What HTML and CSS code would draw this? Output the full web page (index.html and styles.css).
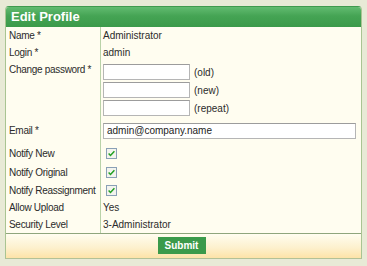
FILE: index.html
```html
<!DOCTYPE html>
<html lang="en">
<head>
    <meta charset="UTF-8">
    <title>Edit Profile</title>
    <link rel="stylesheet" href="styles.css">
</head>
<body>
    <div class="panel">
        <div class="panel-head">Edit Profile</div>
        <form class="profile">
            <div class="grid">
                <div class="label">Name *</div>
                <div class="value">Administrator</div>

                <div class="label">Login *</div>
                <div class="value">admin</div>

                <div class="label top">Change password *</div>
                <div class="value pw">
                    <div class="pw-line"><input type="password" class="short"><span>(old)</span></div>
                    <div class="pw-line"><input type="password" class="short"><span>(new)</span></div>
                    <div class="pw-line"><input type="password" class="short"><span>(repeat)</span></div>
                </div>

                <div class="label">Email *</div>
                <div class="value"><input type="text" class="wide" value="admin@company.name"></div>

                <div class="label">Notify New</div>
                <div class="value"><span class="check"><svg width="11" height="11" viewBox="0 0 11 11"><rect x="0.5" y="0.5" width="10" height="10" fill="#f3f4ee" stroke="#8aa0b6"/><path d="M2.6 5.4 L4.5 7.4 L8.4 3.2" fill="none" stroke="#22a022" stroke-width="1.5"/></svg></span></div>

                <div class="label">Notify Original</div>
                <div class="value"><span class="check"><svg width="11" height="11" viewBox="0 0 11 11"><rect x="0.5" y="0.5" width="10" height="10" fill="#f3f4ee" stroke="#8aa0b6"/><path d="M2.6 5.4 L4.5 7.4 L8.4 3.2" fill="none" stroke="#22a022" stroke-width="1.5"/></svg></span></div>

                <div class="label">Notify Reassignment</div>
                <div class="value"><span class="check"><svg width="11" height="11" viewBox="0 0 11 11"><rect x="0.5" y="0.5" width="10" height="10" fill="#f3f4ee" stroke="#8aa0b6"/><path d="M2.6 5.4 L4.5 7.4 L8.4 3.2" fill="none" stroke="#22a022" stroke-width="1.5"/></svg></span></div>

                <div class="label">Allow Upload</div>
                <div class="value">Yes</div>

                <div class="label">Security Level</div>
                <div class="value">3-Administrator</div>
            </div>
            <div class="panel-foot">
                <button type="button">Submit</button>
            </div>
        </form>
    </div>
</body>
</html>
```

FILE: styles.css
```css
body {
    margin: 0;
    padding: 6px 0 0 5px;
    background-color: #e8ead6;
    font-family: 'Liberation Sans', Arial, sans-serif;
    font-size: 10px;
    color: #2b2b2b;
}
.panel {
    width: 357px;
    box-sizing: border-box;
    border: 1px solid #a9c492;
    border-top-color: #3f9a4e;
    border-bottom-color: #b3c197;
    border-radius: 4px 4px 0 0;
    background-color: #fffdf0;
    overflow: hidden;
}
.panel-head {
    height: 20px;
    line-height: 20px;
    padding-left: 5px;
    background: linear-gradient(#62bb70, #45a454 45%, #3b9a4a);
    color: #ffffff;
    font-size: 13px;
    font-weight: bold;
}
.grid {
    display: grid;
    grid-template-columns: 95px 1fr;
    grid-template-rows: 17px 17px 58px 23px 22px 17px 18px 17px 17px;
}
.label {
    display: flex;
    align-items: center;
    padding-left: 3px;
    border-right: 1px solid #b9d2a8;
    white-space: nowrap;
    letter-spacing: -0.3px;
}
.label.top {
    align-items: flex-start;
    padding-top: 3px;
    line-height: 12px;
}
.value {
    display: flex;
    align-items: center;
    padding: 0 5px 0 2px;
}
.value.pw {
    flex-direction: column;
    align-items: flex-start;
    justify-content: flex-start;
    gap: 2px;
    padding-top: 3px;
}
.pw-line {
    display: flex;
    align-items: center;
}
.pw-line span {
    margin-left: 4px;
}
input {
    height: 16px;
    box-sizing: border-box;
    border: 1px solid #b5b5b5;
    border-top-color: #9c9c9c;
    background-color: #ffffff;
    padding: 0 3px;
    margin: 0;
    font-family: 'Liberation Sans', Arial, sans-serif;
    font-size: 10px;
    color: #222;
}
input.short {
    width: 87px;
}
input.wide {
    width: 253px;
}
.check {
    display: flex;
    margin-left: 3px;
}
.panel-foot {
    border-top: 1px solid #8fa57c;
    background: linear-gradient(#fffdf0, #fdf1cf 55%, #fde3a8);
    display: flex;
    justify-content: center;
    align-items: flex-start;
    padding-top: 3px;
    height: 21px;
}
button {
    height: 17px;
    width: 48px;
    padding: 0;
    border: none;
    background-color: #3b9a4b;
    color: #ffffff;
    font-family: 'Liberation Sans', Arial, sans-serif;
    font-size: 10px;
    font-weight: bold;
    margin-left: -4px;
}
```
